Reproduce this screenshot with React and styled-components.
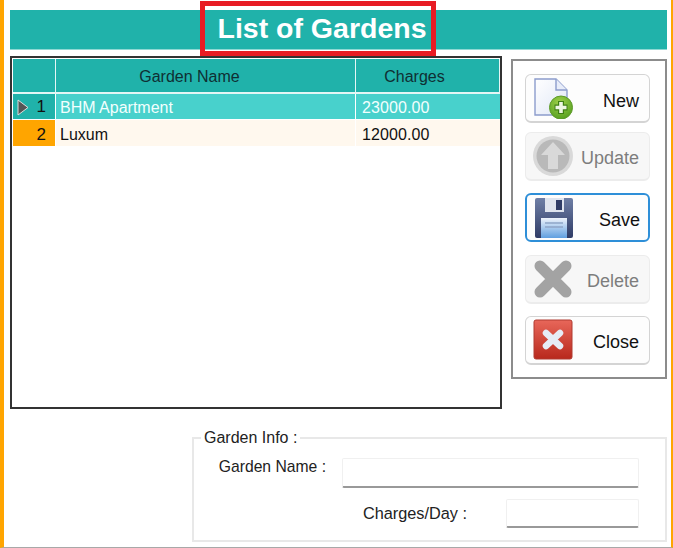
import React from "react";
import styled, { createGlobalStyle } from "styled-components";

const Global = createGlobalStyle`
  html, body { margin: 0; padding: 0; background: #fff; }
  * { box-sizing: border-box; }
`;

const Form = styled.div`
  position: relative;
  width: 673px;
  height: 548px;
  overflow: hidden;
  background: #fff;
  border-left: 4px solid #ffa500;
  border-right: 2px solid #ffa500;
  border-bottom: 1px solid #a8a8a8;
  padding: 10px 4px 0 6px;
  font-family: "Liberation Sans", Arial, sans-serif;
  font-size: 16px;
  color: #111;
`;

const TitleBar = styled.div`
  height: 40px;
  background: #20b2aa;
  display: flex;
  justify-content: center;
  border-bottom: 1px solid #8fd8d3;
`;

const Title = styled.h1`
  margin: 0 0 0 -33px;
  width: 236px;
  text-align: center;
  color: #fff;
  font-size: 28.5px;
  line-height: 36px;
  font-weight: 700;
  white-space: nowrap;
`;

const Highlight = styled.div`
  position: absolute;
  left: 196px;
  top: 1px;
  width: 236px;
  height: 55px;
  border: 5px solid #e81c24;
`;

const Middle = styled.div`
  display: flex;
  align-items: flex-start;
  gap: 9px;
  margin-top: 6px;
`;

const Grid = styled.div`
  width: 492px;
  height: 353px;
  border: 2px solid #333;
  background: #fff;
  padding: 1px 0 0 1px;
  display: grid;
  grid-template-columns: 43px 300px 1fr;
  grid-template-rows: 35px 26px 27px;
  align-content: start;
`;

const HeaderCell = styled.div`
  background: #20b2aa;
  border-right: 1px solid #e4f6f5;
  border-bottom: 2px solid #e4f6f5;
  display: flex;
  align-items: center;
  justify-content: center;
  color: #0f2f33;
  font-size: 16px;
  padding: 3px ${(p) => p.$shift || 0}px 0 0;
  &:last-child { border-right: 0; }
`;

const RowHead = styled.div`
  background: ${(p) => (p.$selected ? "#20b2aa" : "#ffa500")};
  border-right: 1px solid #fff;
  border-bottom: 1px solid #fff;
  display: flex;
  align-items: center;
  justify-content: space-between;
  padding: ${(p) => (p.$selected ? "1px" : "3px")} 9px 0 4px;
  color: #111;
  font-size: 17px;
`;

const Cell = styled.div`
  background: ${(p) => (p.$selected ? "#48d1cc" : "#fff8ee")};
  color: ${(p) => (p.$selected ? "#f2fffe" : "#111")};
  border-right: ${(p) => (p.$num ? "0" : "1px solid #fff")};
  border-bottom: 1px solid #fff;
  display: flex;
  align-items: center;
  padding-left: ${(p) => (p.$num ? "6px" : "4px")};
  padding-top: ${(p) => (p.$selected ? "2px" : "4px")};
  letter-spacing: ${(p) => (p.$num ? "0.1px" : "0")};
  font-size: 16px;
`;

const Toolbar = styled.div`
  width: 156px;
  height: 320px;
  margin-top: 3px;
  border: 2px solid #8c8c8c;
  background: #fff;
  padding: 13px 15px 0 12px;
  display: flex;
  flex-direction: column;
`;

const Btn = styled.button`
  width: 125px;
  height: 49px;
  flex: none;
  margin-top: ${(p) => p.$mt || 0}px;
  border-radius: 6px;
  border: ${(p) =>
    p.$focus ? "2px solid #2e8fd8" : p.$off ? "1.5px solid #ececec" : "1.5px solid #d4d4d4"};
  border-bottom-width: 2px;
  background: ${(p) => (p.$off ? "#f7f7f7" : "#fdfdfd")};
  color: ${(p) => (p.$off ? "#7d7d7d" : "#111")};
  display: flex;
  align-items: center;
  justify-content: space-between;
  padding: 0 ${(p) => (p.$focus ? 8 : 10)}px 0 6px;
  font: inherit;
  font-size: 18px;
`;

const BtnLabel = styled.span`
  padding-top: ${(p) => (p.$low ? 6 : 5)}px;
`;

const IconSlot = styled.svg`
  width: 42px;
  height: 42px;
  flex: none;
  display: block;
`;

const NewIcon = () => (
  <IconSlot viewBox="0 0 42 42">
    <defs>
      <linearGradient id="pg" x1="0" y1="0" x2="1" y2="1">
        <stop offset="0" stopColor="#ffffff" />
        <stop offset="1" stopColor="#dfe6f6" />
      </linearGradient>
      <radialGradient id="gb" cx="0.45" cy="0.3" r="0.8">
        <stop offset="0" stopColor="#9fd14a" />
        <stop offset="1" stopColor="#4f9a1c" />
      </radialGradient>
    </defs>
    <path d="M3 2H24L35 13V38H3Z" fill="url(#pg)" stroke="#8c9ccc" strokeWidth="1.4" />
    <path d="M24 2V13H35" fill="#e8edf9" stroke="#8c9ccc" strokeWidth="1.4" />
    <circle cx="29" cy="30.5" r="11.5" fill="url(#gb)" stroke="#5d9a2a" strokeWidth="1" />
    <path d="M29 24V37M22.5 30.5H35.5" stroke="#3f7f14" strokeWidth="6" />
    <path d="M29 25V36M23.5 30.5H34.5" stroke="#eef6e4" strokeWidth="3.6" />
  </IconSlot>
);

const UpdateIcon = () => (
  <IconSlot viewBox="0 0 42 42">
    <circle cx="21" cy="21" r="20" fill="#d9d9d9" />
    <circle cx="21" cy="21" r="16.5" fill="#b9b9b9" />
    <path d="M21 7L33 20H26V34H16V20H9Z" fill="#d9d9d9" />
  </IconSlot>
);

const SaveIcon = () => (
  <IconSlot viewBox="0 0 42 42">
    <defs>
      <linearGradient id="fd" x1="0" y1="0" x2="0" y2="1">
        <stop offset="0" stopColor="#6f7fa6" />
        <stop offset="1" stopColor="#2f3c66" />
      </linearGradient>
      <linearGradient id="lb" x1="0" y1="0" x2="0" y2="1">
        <stop offset="0" stopColor="#eef3fb" />
        <stop offset="1" stopColor="#5f9fe0" />
      </linearGradient>
    </defs>
    <rect x="2" y="1" width="38" height="40" rx="2" fill="url(#fd)" />
    <rect x="12" y="1" width="19" height="14" fill="#dfe4ee" />
    <rect x="23" y="3" width="6" height="10" fill="#2f3c66" />
    <rect x="8" y="21" width="26" height="20" fill="url(#lb)" />
    <path d="M12 26H30M12 30H30" stroke="#8ea5c8" strokeWidth="1.5" />
  </IconSlot>
);

const DeleteIcon = () => (
  <IconSlot viewBox="0 0 42 42">
    <path d="M8 8L34 34M34 8L8 34" stroke="#a3a3a3" strokeWidth="11" strokeLinecap="round" />
  </IconSlot>
);

const CloseIcon = () => (
  <IconSlot viewBox="0 0 42 42">
    <defs>
      <linearGradient id="rd" x1="0" y1="0" x2="0" y2="1">
        <stop offset="0" stopColor="#e8675a" />
        <stop offset="1" stopColor="#b8281c" />
      </linearGradient>
    </defs>
    <rect x="2" y="1" width="38" height="39" rx="2" fill="url(#rd)" stroke="#b03a30" />
    <path d="M14 14L28 27M28 14L14 27" stroke="#e6ecf6" strokeWidth="6.5" strokeLinecap="round" />
  </IconSlot>
);

const Arrow = () => (
  <svg width="12" height="17" viewBox="0 0 12 17">
    <path d="M1 1L11 8.5L1 16Z" fill="#555" stroke="#ddd" strokeWidth="1" />
  </svg>
);

const Info = styled.fieldset`
  margin: 20px 0 0 182px;
  padding: 0;
  width: 475px;
  height: 113px;
  border: 2px solid #e8e8e8;
  display: flex;
  flex-direction: column;
  min-width: 0;
`;

const Legend = styled.legend`
  margin-left: 7px;
  padding: 0 3px;
  font-size: 16px;
  line-height: 18px;
  color: #222;
`;

const Line = styled.div`
  display: flex;
  align-items: center;
  justify-content: flex-end;
  padding-right: 26px;
  margin-top: ${(p) => p.$mt}px;
`;

const Label = styled.label`
  font-size: ${(p) => p.$size}px;
  color: #222;
  margin-right: ${(p) => p.$gap}px;
  position: relative;
  top: ${(p) => p.$up}px;
`;

const Input = styled.div`
  width: ${(p) => p.$w}px;
  height: ${(p) => p.$h}px;
  background: #fff;
  border: 1px solid #f0f0f0;
  border-bottom: 2px solid #999;
  border-radius: 2px;
`;

const buttons = [
  { label: "New", Icon: NewIcon, low: true },
  { label: "Update", Icon: UpdateIcon, off: true, mt: 9 },
  { label: "Save", Icon: SaveIcon, focus: true, mt: 12 },
  { label: "Delete", Icon: DeleteIcon, off: true, mt: 13 },
  { label: "Close", Icon: CloseIcon, mt: 12 },
];

const rows = [
  { id: 1, name: "BHM Apartment", charges: "23000.00", selected: true },
  { id: 2, name: "Luxum", charges: "12000.00" },
];

export default function App() {
  return (
    <Form>
      <Global />
      <TitleBar>
        <Title>List of Gardens</Title>
      </TitleBar>
      <Highlight />
      <Middle>
        <Grid>
          <HeaderCell />
          <HeaderCell $shift={32}>Garden Name</HeaderCell>
          <HeaderCell $shift={26}>Charges</HeaderCell>
          {rows.map((r) => (
            <React.Fragment key={r.id}>
              <RowHead $selected={r.selected}>
                {r.selected ? <Arrow /> : <span />}
                <span>{r.id}</span>
              </RowHead>
              <Cell $selected={r.selected}>{r.name}</Cell>
              <Cell $selected={r.selected} $num>{r.charges}</Cell>
            </React.Fragment>
          ))}
        </Grid>
        <Toolbar>
          {buttons.map(({ label, Icon, off, focus, mt, low }) => (
            <Btn key={label} $off={off} $focus={focus} $mt={mt}>
              <Icon />
              <BtnLabel $low={low}>{label}</BtnLabel>
            </Btn>
          ))}
        </Toolbar>
      </Middle>
      <Info>
        <Legend>Garden Info :</Legend>
        <Line $mt={11}>
          <Label $size={15.7} $gap={16} $up={-6}>Garden Name :</Label>
          <Input $w={297} $h={30} />
        </Line>
        <Line $mt={11}>
          <Label $size={16.3} $gap={39} $up={0}>Charges/Day :</Label>
          <Input $w={133} $h={29} />
        </Line>
      </Info>
    </Form>
  );
}
